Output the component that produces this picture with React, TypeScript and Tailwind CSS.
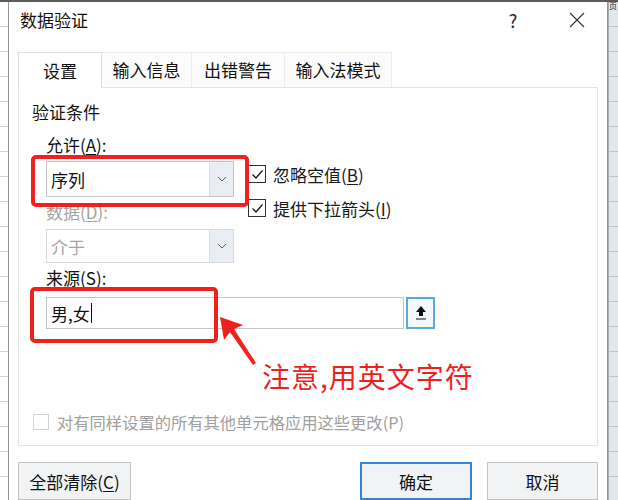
import React from "react";

const FONT = { fontFamily: '"Noto Sans CJK SC", "Noto Sans", sans-serif' };

function Chevron() {
  return (
    <svg width="10" height="6" viewBox="0 0 10 6" fill="none">
      <path d="M1 1 L5 5 L9 1" stroke="#606060" strokeWidth="1" />
    </svg>
  );
}

function Check() {
  return (
    <svg width="13" height="11" viewBox="0 0 13 11" fill="none">
      <path d="M1.5 5.5 L5 9 L11.5 1.5" stroke="#1a1a1a" strokeWidth="1.3" />
    </svg>
  );
}

function Combo({ text, disabled, h }: { text: string; disabled?: boolean; h: string }) {
  return (
    <div
      className={`flex ${h} w-[188px] items-stretch border ${
        disabled ? "border-[#dadada]" : "border-[#c4c4c4]"
      } bg-white`}
    >
      <div
        className={`flex flex-1 items-center pl-[4px] text-[17px] leading-none ${
          disabled ? "text-[#a3a3a3]" : "text-[#111]"
        }`}
      >
        {text}
      </div>
      <div className="flex w-[24px] items-center justify-center border-l border-[#d9e1e8] bg-[#e8eef3]">
        <Chevron />
      </div>
    </div>
  );
}

function CheckRow({ label, underline }: { label: string; underline: string }) {
  return (
    <div className="flex h-[22px] items-center">
      <div className="flex h-[18px] w-[18px] items-center justify-center border border-[#333] bg-white">
        <Check />
      </div>
      <span className="ml-[7px] text-[17px] leading-none text-[#1a1a1a]">
        {label}(<span className="underline underline-offset-2">{underline}</span>)
      </span>
    </div>
  );
}

function Button({ children, w, primary }: { children: React.ReactNode; w: string; primary?: boolean }) {
  return (
    <div
      className={`flex h-[38px] ${w} items-center justify-center ${
        primary ? "border-2 border-[#2f86d4]" : "border border-[#c3c3c3]"
      } bg-[#f1f3f5] text-[17px] leading-none text-[#111]`}
    >
      {children}
    </div>
  );
}

export default function App() {
  const gridRows = Array.from({ length: 21 });
  return (
    <div className="relative h-[500px] w-[618px] overflow-hidden bg-white" style={FONT}>
      <div className="h-[2px] w-full bg-[#5a5a5a]" />
      <div className="flex h-[498px]">
        {/* spreadsheet behind the dialog, left edge */}
        <div className="w-[8px] bg-white">
          {gridRows.map((_, i) => (
            <div key={i} className="h-[25px] border-b border-[#cfd3d6]" />
          ))}
        </div>

        {/* dialog */}
        <div className="flex w-[600px] flex-col border-x border-[#8e959b] bg-white">
          <div className="flex h-[36px] items-center pl-[11px]">
            <span className="text-[17px] leading-none text-[#111]">数据验证</span>
            <div className="ml-auto flex items-center">
              <div className="flex w-[40px] justify-center text-[18px] leading-none text-[#222]">?</div>
              <div className="ml-[24px] mr-[10px] flex w-[40px] justify-center">
                <svg width="16" height="16" viewBox="0 0 16 16" fill="none">
                  <path d="M1 1 L15 15 M15 1 L1 15" stroke="#333" strokeWidth="1.1" />
                </svg>
              </div>
            </div>
          </div>

          {/* tabs */}
          <div className="mt-[14px] flex h-[36px] px-[9px]">
            <div className="relative z-10 -mb-px flex w-[84px] items-center justify-center border-x border-t border-[#e0e0e0] bg-white text-[17px] leading-none text-[#111]">
              设置
            </div>
            <div className="flex w-[90px] items-center justify-center border-r border-t border-[#ececec] bg-[#fcfcfc] text-[17px] leading-none text-[#111]">
              输入信息
            </div>
            <div className="flex w-[93px] items-center justify-center border-r border-t border-[#ececec] bg-[#fcfcfc] text-[17px] leading-none text-[#111]">
              出错警告
            </div>
            <div className="flex w-[107px] items-center justify-center border-r border-t border-[#ececec] bg-[#fcfcfc] text-[17px] leading-none text-[#111]">
              输入法模式
            </div>
          </div>

          {/* tab panel */}
          <div className="mx-[9px] flex h-[364px] flex-col border border-[#e3e3e3]">
            <div className="mt-[12px] pl-[13px] text-[17px] leading-[24px] text-[#111]">验证条件</div>

            <div className="flex flex-col pl-[27px]">
              <div className="mt-[10px] text-[17px] leading-[22px] text-[#111]">
                允许(<span className="underline underline-offset-2">A</span>):
              </div>
              <div className="mt-[5px] flex">
                <div className="flex flex-col">
                  <Combo text="序列" h="h-[36px]" />
                  <div className="mt-[4px] text-[17px] leading-[22px] text-[#a3a3a3]">
                    数据(<span className="underline underline-offset-2">D</span>):
                  </div>
                  <div className="mt-[6px]">
                    <Combo text="介于" disabled h="h-[34px]" />
                  </div>
                </div>
                <div className="ml-[14px] mt-[2px] flex flex-col gap-[12px]">
                  <CheckRow label="忽略空值" underline="B" />
                  <CheckRow label="提供下拉箭头" underline="I" />
                </div>
              </div>
              <div className="mt-[4px] text-[17px] leading-[22px] text-[#111]">
                来源(<span className="underline underline-offset-2">S</span>):
              </div>
              <div className="mt-[8px] flex h-[32px]">
                <div className="flex w-[358px] items-center border border-[#c4c4c4] bg-white pl-[4px] text-[17px] leading-none text-[#111]">
                  男,女<span className="ml-[1px] inline-block h-[20px] w-px bg-[#111]" />
                </div>
                <div className="ml-[2px] flex w-[29px] items-center justify-center border-2 border-[#5aa9d6] bg-[#f3f8fc]">
                  <svg width="12" height="16" viewBox="0 0 12 16" fill="none">
                    <path d="M6 1 L11 7 L8 7 L8 11 L4 11 L4 7 L1 7 Z" fill="#111" />
                    <path d="M1 14 L11 14" stroke="#111" strokeWidth="1" />
                  </svg>
                </div>
              </div>
            </div>

            <div className="mt-[82px] flex h-[22px] items-center pl-[14px]">
              <div className="h-[16px] w-[16px] border border-[#d2d2d2] bg-white" />
              <span className="ml-[8px] text-[16.3px] leading-none text-[#a0a0a0]">
                对有同样设置的所有其他单元格应用这些更改(P)
              </span>
            </div>
          </div>

          {/* buttons */}
          <div className="mt-[16px] flex px-[9px]">
            <Button w="w-[113px]">
              全部清除(<span className="underline underline-offset-2">C</span>)
            </Button>
            <div className="ml-auto">
              <Button w="w-[112px]" primary>
                确定
              </Button>
            </div>
            <div className="ml-[15px]">
              <Button w="w-[111px]">取消</Button>
            </div>
          </div>
        </div>

        {/* spreadsheet behind the dialog, right edge */}
        <div className="relative flex-1 border-l border-[#a6adb3] bg-[#e2e7eb]">
          <div className="absolute left-0 top-0 text-[8px] leading-none text-[#222]">页</div>
          {gridRows.map((_, i) => (
            <div key={i} className="h-[25px] border-b border-[#bcc4cb]" />
          ))}
        </div>
      </div>

      {/* red annotations */}
      <div className="absolute left-[31px] top-[155px] h-[52px] w-[218px] rounded-[5px] border-4 border-[#f0201e]" />
      <div className="absolute left-[30px] top-[287px] h-[56px] w-[188px] rounded-[5px] border-4 border-[#f0201e]" />
      <svg className="absolute left-0 top-0" width="618" height="500" viewBox="0 0 618 500" fill="none">
        <path d="M220 317 L224 340 L230 332 L253 365 L256 363 L234 329 L243 325 Z" fill="#f0201e" />
      </svg>
      <div className="absolute left-[262px] top-[360px] text-[28px] leading-[32px] tracking-[1px] text-[#ef1f1f]">
        注意,用英文字符
      </div>
    </div>
  );
}
